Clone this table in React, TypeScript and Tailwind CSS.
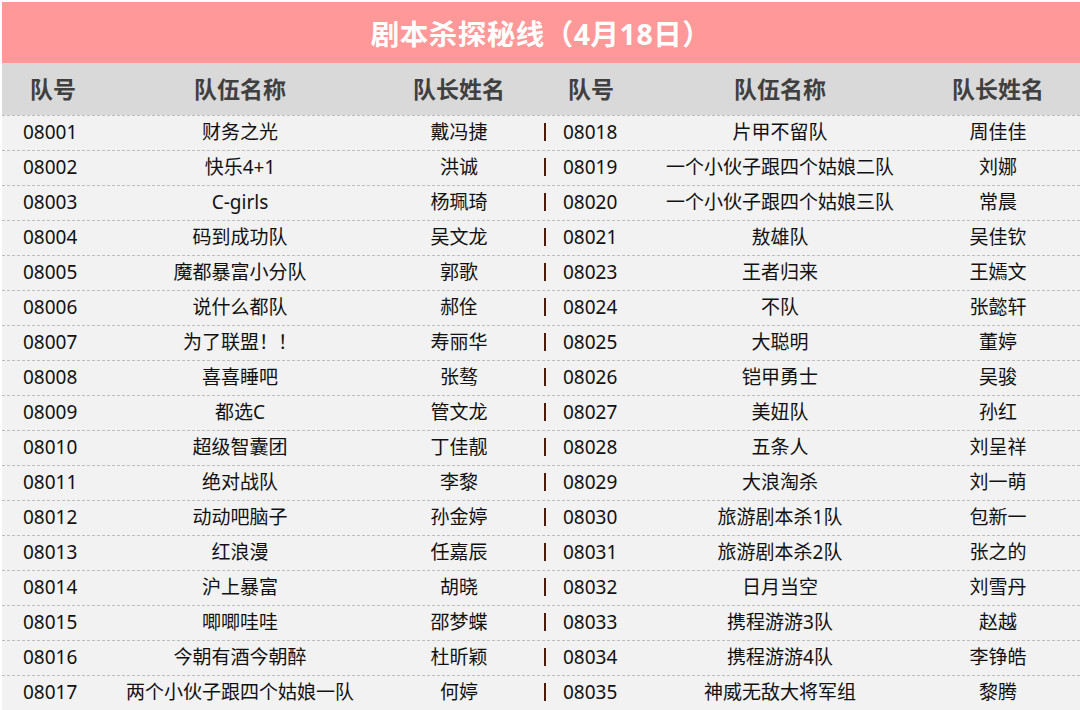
const left: [string, string, string][] = [
  ['08001', '财务之光', '戴冯捷'],
  ['08002', '快乐4+1', '洪诚'],
  ['08003', 'C-girls', '杨珮琦'],
  ['08004', '码到成功队', '吴文龙'],
  ['08005', '魔都暴富小分队', '郭歌'],
  ['08006', '说什么都队', '郝佺'],
  ['08007', '为了联盟！！', '寿丽华'],
  ['08008', '喜喜睡吧', '张骜'],
  ['08009', '都选C', '管文龙'],
  ['08010', '超级智囊团', '丁佳靓'],
  ['08011', '绝对战队', '李黎'],
  ['08012', '动动吧脑子', '孙金婷'],
  ['08013', '红浪漫', '任嘉辰'],
  ['08014', '沪上暴富', '胡晓'],
  ['08015', '唧唧哇哇', '邵梦蝶'],
  ['08016', '今朝有酒今朝醉', '杜昕颖'],
  ['08017', '两个小伙子跟四个姑娘一队', '何婷'],
];

const right: [string, string, string][] = [
  ['08018', '片甲不留队', '周佳佳'],
  ['08019', '一个小伙子跟四个姑娘二队', '刘娜'],
  ['08020', '一个小伙子跟四个姑娘三队', '常晨'],
  ['08021', '敖雄队', '吴佳钦'],
  ['08023', '王者归来', '王嫣文'],
  ['08024', '不队', '张懿轩'],
  ['08025', '大聪明', '董婷'],
  ['08026', '铠甲勇士', '吴骏'],
  ['08027', '美妞队', '孙红'],
  ['08028', '五条人', '刘呈祥'],
  ['08029', '大浪淘杀', '刘一萌'],
  ['08030', '旅游剧本杀1队', '包新一'],
  ['08031', '旅游剧本杀2队', '张之的'],
  ['08032', '日月当空', '刘雪丹'],
  ['08033', '携程游游3队', '赵越'],
  ['08034', '携程游游4队', '李铮皓'],
  ['08035', '神威无敌大将军组', '黎腾'],
];

const cols = 'grid grid-cols-[102px_272px_166px_6px_86px_292px_144px_1fr]';

export default function App() {
  return (
    <div className="w-[1080px] h-[710px] overflow-hidden bg-white pl-[2px] pt-[2px] font-['Noto_Sans','Noto_Sans_CJK_SC',sans-serif]">
      <div className="h-[61px] bg-[#ff9999] flex items-center justify-center pt-[4px]">
        <h1 className="text-[28.5px] font-bold text-white tracking-[0.5px]">剧本杀探秘线（4月18日）</h1>
      </div>

      <div className={`${cols} h-[52px] bg-[#d9d9d9] items-center text-[23px] font-bold text-[#404040]`}>
        <div className="text-center">队号</div>
        <div className="text-center">队伍名称</div>
        <div className="text-center">队长姓名</div>
        <div />
        <div className="text-center">队号</div>
        <div className="text-center">队伍名称</div>
        <div className="text-center">队长姓名</div>
        <div />
      </div>

      <div className="bg-[#f2f2f2]">
        {left.map((l, i) => {
          const r = right[i];
          return (
            <div
              key={l[0]}
              className={`${cols} h-[35px] items-center pb-[2px] border-t border-dashed border-[#bdbdbd] text-[19px] text-[#111]`}
            >
              <div className="pl-[21px]">{l[0]}</div>
              <div className="text-center whitespace-nowrap">{l[1]}</div>
              <div className="text-center">{l[2]}</div>
              <div className="flex justify-center">
                <span className="block w-[2px] h-[18px] bg-[#4a1c0c]" />
              </div>
              <div className="pl-[15px]">{r[0]}</div>
              <div className="text-center whitespace-nowrap">{r[1]}</div>
              <div className="text-center">{r[2]}</div>
              <div />
            </div>
          );
        })}
      </div>
    </div>
  );
}
